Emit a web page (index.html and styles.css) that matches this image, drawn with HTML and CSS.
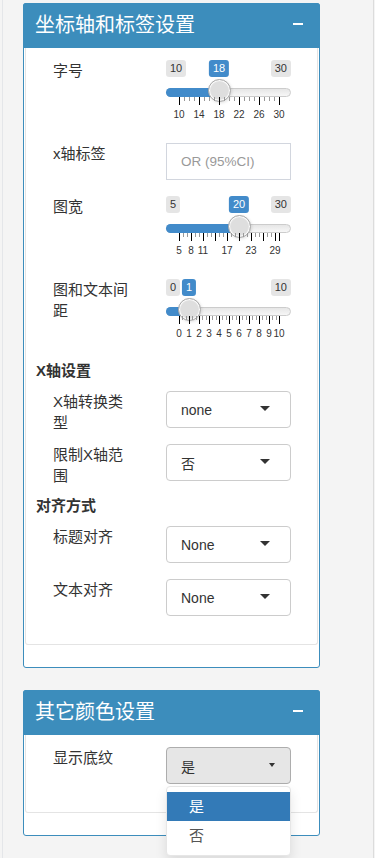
FILE: index.html
```html
<!DOCTYPE html>
<html lang="zh-CN">
<head>
  <meta charset="UTF-8" />
  <meta name="viewport" content="width=device-width, initial-scale=1.0" />
  <title>设置</title>
  <link rel="stylesheet" href="styles.css">
</head>
<body>
  <div class="sidebar">

    <!-- Axis & label settings -->
    <div class="box">
      <div class="box-header">
        <h3 class="box-title">坐标轴和标签设置</h3>
        <span class="box-collapse"></span>
      </div>
      <div class="box-body">
        <div class="form-row">
          <label class="form-label">字号</label>
          <div class="slider" data-min="10" data-max="30" data-value="18" data-step="4" data-minor="3" data-labels="10,14,18,22,26,30"></div>
        </div>
        <div class="form-row">
          <label class="form-label">x轴标签</label>
          <input class="text-input" type="text" placeholder="OR (95%CI)" />
        </div>
        <div class="form-row">
          <label class="form-label">图宽</label>
          <div class="slider" data-min="5" data-max="30" data-value="20" data-step="3" data-minor="2" data-labels="5,8,11,17,23,29"></div>
        </div>
        <div class="form-row">
          <label class="form-label">图和文本间距</label>
          <div class="slider" data-min="0" data-max="10" data-value="1" data-step="1" data-minor="2" data-labels="0,1,2,3,4,5,6,7,8,9,10"></div>
        </div>

        <h4 class="section-title">X轴设置</h4>
        <div class="form-row">
          <label class="form-label">X轴转换类型</label>
          <div class="select"><span class="select-value">none</span><span class="caret"></span></div>
        </div>
        <div class="form-row">
          <label class="form-label">限制X轴范围</label>
          <div class="select"><span class="select-value">否</span><span class="caret"></span></div>
        </div>

        <h4 class="section-title">对齐方式</h4>
        <div class="form-row">
          <label class="form-label">标题对齐</label>
          <div class="select"><span class="select-value">None</span><span class="caret"></span></div>
        </div>
        <div class="form-row">
          <label class="form-label">文本对齐</label>
          <div class="select"><span class="select-value">None</span><span class="caret"></span></div>
        </div>
      </div>
      <div class="box-footer"></div>
    </div>

    <!-- Other colour settings -->
    <div class="box">
      <div class="box-header">
        <h3 class="box-title">其它颜色设置</h3>
        <span class="box-collapse"></span>
      </div>
      <div class="box-body">
        <div class="form-row">
          <label class="form-label">显示底纹</label>
          <div class="select open">
            <span class="select-value">是</span><span class="caret"></span>
            <ul class="dropdown">
              <li class="active">是</li>
              <li>否</li>
            </ul>
          </div>
        </div>
      </div>
      <div class="box-footer"></div>
    </div>

  </div>

  <script>
    (function() {
      // build range sliders from their data attributes
      document.querySelectorAll('.slider').forEach(function(el) {
        const min = +el.dataset.min;
        const max = +el.dataset.max;
        const val = +el.dataset.value;
        const step = +el.dataset.step;
        const minor = +el.dataset.minor;
        const labels = el.dataset.labels.split(',');
        const pos = (v) => 13 + (v - min) / (max - min) * 100;

        let html = '';
        html += '<span class="irs-line"></span>';
        html += '<span class="irs-bar" style="width:' + pos(val) + 'px"></span>';
        html += '<span class="irs-min">' + min + '</span>';
        html += '<span class="irs-max">' + max + '</span>';
        html += '<span class="irs-single" style="left:' + pos(val) + 'px">' + val + '</span>';
        html += '<span class="irs-handle" style="left:' + (pos(val) - 11.5) + 'px"></span>';

        let ticks = '';
        for (let v = min; v <= max; v += step) {
          ticks += '<span class="tick" style="left:' + pos(v) + 'px"></span>';
          for (let k = 1; k <= minor; k++) {
            const m = v + k * step / (minor + 1);
            if (m < max) ticks += '<span class="tick small" style="left:' + pos(m) + 'px"></span>';
          }
        }
        if ((max - min) % step !== 0) {
          ticks += '<span class="tick" style="left:' + pos(max) + 'px"></span>';
        }
        labels.forEach(function(l) {
          ticks += '<span class="tick-label" style="left:' + pos(+l) + 'px">' + l + '</span>';
        });
        html += '<div class="irs-grid">' + ticks + '</div>';
        el.innerHTML = html;
      });
    })();
  </script>
</body>
</html>
```

FILE: styles.css
```css
* {
  margin: 0;
  padding: 0;
  box-sizing: border-box;
}

body {
  font-family: 'Liberation Sans', 'Noto Sans CJK SC', sans-serif;
  background-color: #f4f4f4;
  color: #333;
}

/* Sidebar column */
.sidebar {
  margin-left: 2px;
  width: 372px;
  min-height: 100vh;
  padding: 3px 0 0 20px;
  border-left: 1px solid #e4e6e9;
  border-right: 1px solid #dcdcdc;
}

/* Box */
.box {
  width: 297px;
  background: #fff;
  border: 1px solid #3c8dbc;
  border-radius: 3px;
  margin-bottom: 22px;
}

.box-header {
  height: 45px;
  background-color: #3c8dbc;
  display: flex;
  align-items: center;
  justify-content: space-between;
  padding: 0 17px 3px 12px;
  margin: -1px -1px 0 -1px;
  border-radius: 3px 3px 0 0;
}

.box-title {
  font-family: 'Noto Sans CJK SC', sans-serif;
  font-size: 20px;
  font-weight: normal;
  line-height: 24px;
  color: #fff;
}

.box-collapse {
  width: 10px;
  height: 2px;
  background: #fff;
}

.box-body {
  margin: 0 1px;
  padding: 12px 10px 12px;
  border: 1px solid #e4e4e4;
  border-top: none;
  border-radius: 0 0 3px 3px;
}

.box-footer {
  height: 22px;
}

.section-title {
  font-family: 'Liberation Sans', 'Noto Sans CJK SC', sans-serif;
  font-size: 15px;
  font-weight: bold;
  line-height: 18px;
  margin-bottom: 11px;
}

/* Label + control rows */
.form-row {
  display: grid;
  grid-template-columns: 80px 125px;
  column-gap: 33px;
  align-items: start;
  margin: 0 0 11px 17px;
}

.form-label {
  font-size: 15px;
  line-height: 21px;
  color: #333;
}

.text-input {
  height: 37px;
  width: 125px;
  margin-bottom: 5px;
  border: 1px solid #d2d6de;
  padding: 0 14px;
  font-family: 'Liberation Sans', sans-serif;
  font-size: 13.5px;
  color: #555;
  outline: none;
}
.text-input::placeholder {
  color: #999;
}

/* Select */
.select {
  position: relative;
  height: 37px;
  margin-bottom: 5px;
  border: 1px solid #ccc;
  border-radius: 4px;
  background: #fff;
  display: flex;
  align-items: center;
  justify-content: space-between;
  padding: 0 20px 0 14px;
  font-size: 14px;
  color: #333;
}
.select .caret {
  width: 0;
  height: 0;
  border-left: 5px solid transparent;
  border-right: 5px solid transparent;
  border-top: 5px solid #333;
  margin-top: -2px;
}
.select.open {
  background: #e6e6e6;
  border-color: #adadad;
  padding-right: 15px;
}
.select.open .caret {
  border-left-width: 3.5px;
  border-right-width: 3.5px;
  border-top-width: 4px;
}

.dropdown {
  position: absolute;
  top: calc(100% + 3px);
  left: -1px;
  right: -1px;
  list-style: none;
  background: #fff;
  border: 1px solid #e6e6e6;
  border-radius: 4px;
  padding: 5px 0;
  box-shadow: 0 6px 12px rgba(0, 0, 0, 0.1);
  z-index: 10;
}
.dropdown li {
  height: 29px;
  line-height: 29px;
  padding-left: 22px;
  font-size: 15px;
  color: #555;
}
.dropdown li.active {
  background: #337ab7;
  color: #fff;
}

/* Range slider */
.slider {
  position: relative;
  height: 67px;
  width: 125px;
  margin-bottom: 5px;
  font-family: 'Liberation Sans', sans-serif;
}
.irs-line {
  position: absolute;
  top: 28px;
  left: 0;
  right: 0;
  height: 9px;
  border: 1px solid #ccc;
  border-radius: 8px;
  background: linear-gradient(to bottom, #dedede -50%, #fff 150%);
}
.irs-bar {
  position: absolute;
  top: 28px;
  left: 0;
  height: 9px;
  background: #428bca;
  border-radius: 8px 0 0 8px;
}
.irs-min,
.irs-max,
.irs-single {
  position: absolute;
  top: 0;
  font-size: 11px;
  line-height: 15px;
  padding: 1px 4px;
  border-radius: 3px;
}
.irs-min,
.irs-max {
  background: rgba(0, 0, 0, 0.1);
  color: #333;
}
.irs-min { left: 0; }
.irs-max { right: 0; }
.irs-single {
  background: #428bca;
  color: #fff;
  transform: translateX(-50%);
}
.irs-handle {
  position: absolute;
  top: 19px;
  width: 23px;
  height: 23px;
  border: 1px solid #ababab;
  border-radius: 50%;
  background: #dedede;
  box-shadow: inset 0 0 1px 1px #fff, 1px 1px 3px rgba(0, 0, 0, 0.1);
}
.irs-grid {
  position: absolute;
  top: 37px;
  left: 0;
  right: 0;
  height: 30px;
}
.tick {
  position: absolute;
  top: 0;
  width: 1px;
  height: 8px;
  background: #000;
}
.tick.small {
  height: 4px;
  background: #999;
}
.tick-label {
  position: absolute;
  top: 12px;
  font-size: 10px;
  line-height: 12px;
  color: #333;
  transform: translateX(-50%);
}
```
